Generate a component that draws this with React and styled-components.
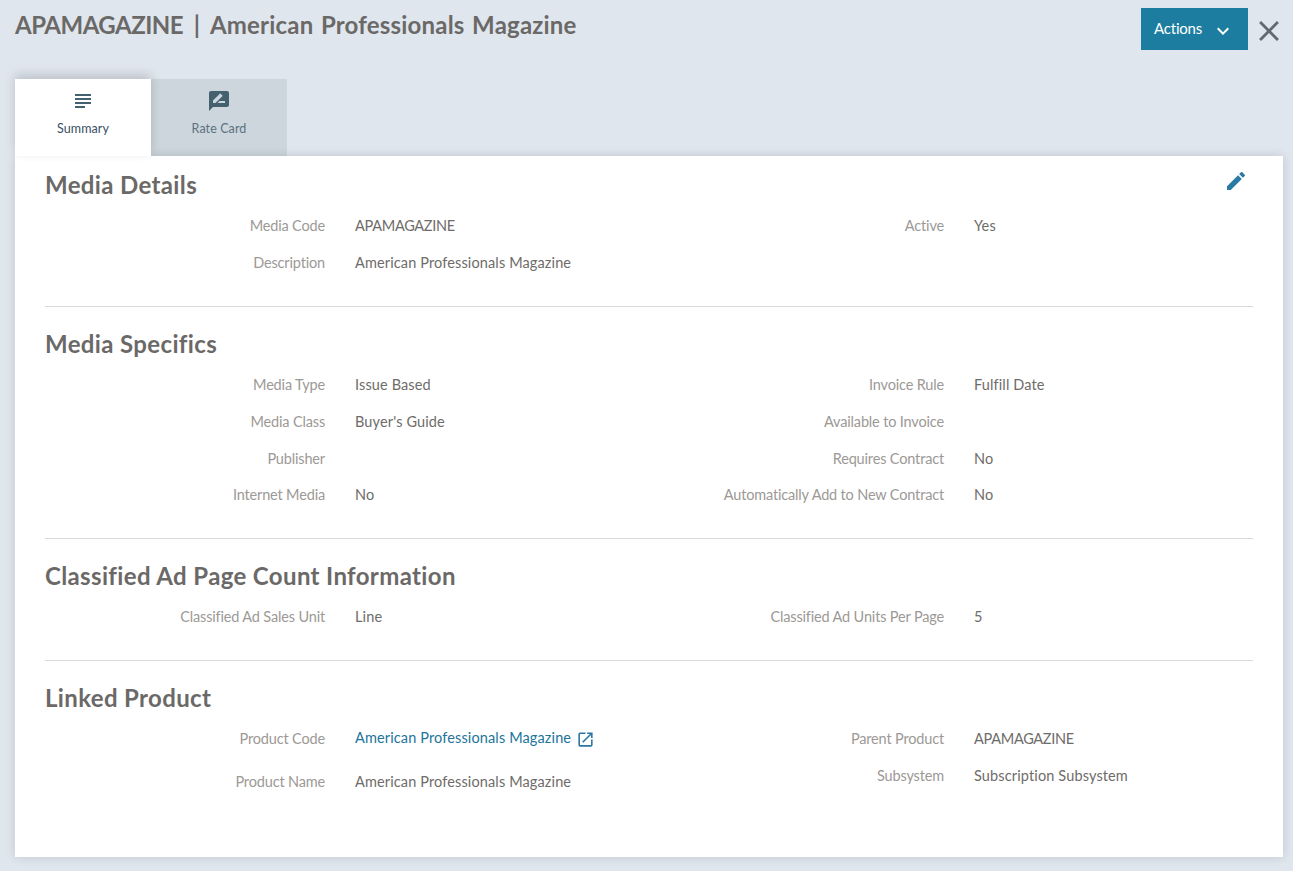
import React from "react";
import styled, { createGlobalStyle } from "styled-components";
import { MdClose, MdExpandMore, MdEdit, MdOpenInNew, MdSubject, MdRateReview } from "react-icons/md";

const GlobalStyle = createGlobalStyle`
  html, body { margin: 0; padding: 0; }
  body {
    background: #e0e6ee;
    font-family: "Lato", "Open Sans", sans-serif;
    color: #666461;
  }
`;

const Page = styled.div`
  width: 1293px;
  height: 871px;
  box-sizing: border-box;
  padding: 8px 10px 14px 15px;
  display: flex;
  flex-direction: column;
  overflow: hidden;
`;

const Header = styled.header`
  display: flex;
  justify-content: space-between;
  align-items: flex-start;
  height: 71px;
  flex: none;
`;

const Title = styled.h1`
  margin: 2px 0 0;
  font-size: 24px;
  line-height: 30px;
  font-weight: 700;
  color: #6b6967;
  letter-spacing: 0.2px;
  word-spacing: 1.5px;
`;

const TitleCode = styled.span`
  letter-spacing: -0.5px;
  word-spacing: 0;
`;

const TitleBar = styled.span`
  margin: 0 3px;
`;

const HeaderActions = styled.div`
  display: flex;
  align-items: flex-start;
  gap: 4px;
`;

const ActionsButton = styled.button`
  width: 107px;
  height: 42px;
  padding: 0 0 3px 13px;
  border: 0;
  background: #1d7da0;
  color: #fff;
  font: 400 15px "Lato", sans-serif;
  letter-spacing: -0.2px;
  display: flex;
  align-items: center;
  gap: 9px;
  svg { font-size: 24px; margin-top: 6px; }
`;

const CloseIcon = styled(MdClose)`
  font-size: 34px;
  color: #5f6a72;
  margin: 6px -3px 0 0;
`;

const Tabs = styled.div`
  display: flex;
  height: 77px;
  flex: none;
`;

const Tab = styled.div`
  width: 136px;
  display: flex;
  flex-direction: column;
  align-items: center;
  padding-top: 10px;
  box-sizing: border-box;
  font-size: 12.5px;
  letter-spacing: 0.1px;
  background: ${(p) => (p.$active ? "#fff" : "#ccd6dc")};
  color: ${(p) => (p.$active ? "#38505f" : "#5b7281")};
  box-shadow: ${(p) => (p.$active ? "0 -4px 10px rgba(0,0,0,0.16)" : "none")};
  position: relative;
  z-index: ${(p) => (p.$active ? 2 : 0)};
  svg { font-size: 24px; color: #45606f; }
  span { margin-top: 8px; line-height: 16px; }
`;

const Card = styled.main`
  width: 1268px;
  height: 701px;
  flex: none;
  box-sizing: border-box;
  background: #fff;
  padding: 0 30px;
  box-shadow: 0 0 10px rgba(0,0,0,0.14);
  position: relative;
  z-index: 1;
`;

const EditButton = styled(MdEdit)`
  position: absolute;
  top: 13px;
  right: 35px;
  font-size: 24px;
  color: #2a7ba3;
`;

const Section = styled.section`
  height: ${(p) => p.$height}px;
  box-sizing: border-box;
  padding-top: ${(p) => p.$top}px;
  border-bottom: ${(p) => (p.$last ? "0" : "1px solid #d9d9d9")};
`;

const Heading = styled.h2`
  margin: 0 0 17px;
  font-size: 24px;
  line-height: 30px;
  font-weight: 700;
  letter-spacing: 0.36px;
  color: #6b6967;
`;

const Columns = styled.div`
  display: grid;
  grid-template-columns: 619px 1fr;
`;

const Column = styled.div`
  display: flex;
  flex-direction: column;
`;

const Field = styled.div`
  display: grid;
  grid-template-columns: 280px 1fr;
  height: ${(p) => p.$height || 37}px;
  font-size: 14.5px;
  line-height: 18px;
`;

const Label = styled.div`
  text-align: right;
  color: #9c9996;
  letter-spacing: -0.16px;
  white-space: nowrap;
`;

const Value = styled.div`
  padding-left: 30px;
  color: #6e6c69;
  letter-spacing: 0.13px;
  white-space: nowrap;
`;

const CodeValue = styled.span`
  letter-spacing: -0.3px;
`;

const ProductLink = styled.a`
  color: #22749b;
  display: flex;
  align-items: flex-start;
  gap: 5px;
  margin-top: -1px;
  svg { font-size: 19px; color: #2a76a0; margin-top: 1px; }
`;

function Pair({ label, value, height }) {
  return (
    <Field $height={height}>
      <Label>{label}</Label>
      <Value>{value}</Value>
    </Field>
  );
}

export default function App() {
  return (
    <Page>
      <GlobalStyle />
      <Header>
        <Title>
          <TitleCode>APAMAGAZINE</TitleCode> <TitleBar>|</TitleBar> American Professionals Magazine
        </Title>
        <HeaderActions>
          <ActionsButton>
            Actions
            <MdExpandMore />
          </ActionsButton>
          <CloseIcon />
        </HeaderActions>
      </Header>
      <Tabs>
        <Tab $active>
          <MdSubject />
          <span>Summary</span>
        </Tab>
        <Tab>
          <MdRateReview />
          <span>Rate Card</span>
        </Tab>
      </Tabs>
      <Card>
        <EditButton />
        <Section $height={151} $top={14}>
          <Heading>Media Details</Heading>
          <Columns>
            <Column>
              <Pair label="Media Code" value={<CodeValue>APAMAGAZINE</CodeValue>} />
              <Pair label="Description" value="American Professionals Magazine" />
            </Column>
            <Column>
              <Pair label="Active" value="Yes" />
            </Column>
          </Columns>
        </Section>
        <Section $height={232} $top={22}>
          <Heading>Media Specifics</Heading>
          <Columns>
            <Column>
              <Pair label="Media Type" value="Issue Based" />
              <Pair label="Media Class" value="Buyer's Guide" />
              <Pair label="Publisher" height={36} />
              <Pair label="Internet Media" value="No" />
            </Column>
            <Column>
              <Pair label="Invoice Rule" value="Fulfill Date" />
              <Pair label="Available to Invoice" />
              <Pair label="Requires Contract" value="No" height={36} />
              <Pair label="Automatically Add to New Contract" value="No" />
            </Column>
          </Columns>
        </Section>
        <Section $height={122} $top={22}>
          <Heading>Classified Ad Page Count Information</Heading>
          <Columns>
            <Column>
              <Pair label="Classified Ad Sales Unit" value="Line" />
            </Column>
            <Column>
              <Pair label="Classified Ad Units Per Page" value="5" />
            </Column>
          </Columns>
        </Section>
        <Section $height={190} $top={22} $last>
          <Heading>Linked Product</Heading>
          <Columns>
            <Column>
              <Pair
                label="Product Code"
                height={43}
                value={
                  <ProductLink>
                    American Professionals Magazine
                    <MdOpenInNew />
                  </ProductLink>
                }
              />
              <Pair label="Product Name" value="American Professionals Magazine" />
            </Column>
            <Column>
              <Pair label="Parent Product" value={<CodeValue>APAMAGAZINE</CodeValue>} />
              <Pair label="Subsystem" value="Subscription Subsystem" />
            </Column>
          </Columns>
        </Section>
      </Card>
    </Page>
  );
}
